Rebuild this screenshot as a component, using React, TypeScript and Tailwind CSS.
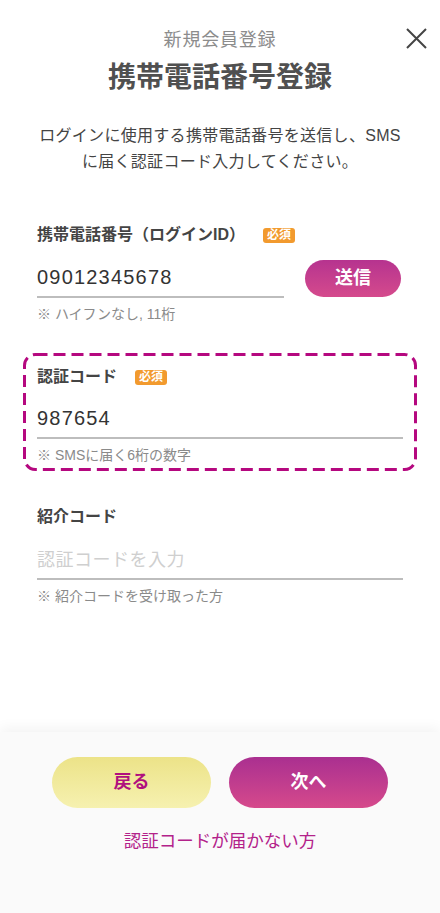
import { useState } from "react";

const FONT = { fontFamily: '"Liberation Sans", "Noto Sans CJK JP", sans-serif' };

function Required() {
  return (
    <span className="inline-flex items-center justify-center h-[15px] px-[4px] rounded-[3px] bg-[#f29a2e] text-white text-[12px] font-bold leading-none">
      必須
    </span>
  );
}

function Label({ text, required }: { text: string; required?: boolean }) {
  return (
    <div className="flex items-center gap-[18px] h-[22px]">
      <span className="text-[16px] leading-[22px] font-bold text-[#444]">{text}</span>
      {required && <Required />}
    </div>
  );
}

function Field({
  value,
  placeholder,
  onChange,
}: {
  value: string;
  placeholder?: string;
  onChange: (v: string) => void;
}) {
  return (
    <input
      className="w-full h-[42px] pt-[2px] border-b-[2px] border-[#bdbdbd] bg-transparent text-[20px] tracking-[1.2px] text-[#333] outline-none placeholder:text-[18px] placeholder:tracking-[0.5px] placeholder:text-[#cfcfcf]"
      style={FONT}
      value={value}
      placeholder={placeholder}
      onChange={(e) => onChange(e.target.value)}
    />
  );
}

function Hint({ children }: { children: React.ReactNode }) {
  return <p className="mt-[7px] text-[14px] leading-[18px] text-[#8a8a8a]">{children}</p>;
}

export default function App() {
  const [phone, setPhone] = useState("09012345678");
  const [code, setCode] = useState("987654");
  const [invite, setInvite] = useState("");

  return (
    <div className="min-h-[913px] w-full flex flex-col bg-white" style={FONT}>
      <div className="flex-1 relative">
        <button className="absolute right-[13px] top-[28px] w-[21px] h-[21px]" aria-label="close">
          <svg viewBox="0 0 21 21" className="w-full h-full" fill="none" stroke="#444" strokeWidth="2">
            <path d="M1 1 L20 20 M20 1 L1 20" />
          </svg>
        </button>

        <div className="pt-[28px] text-center">
          <p className="text-[18px] leading-[24px] tracking-[0.8px] text-[#8c8c8c]">新規会員登録</p>
          <h1 className="mt-[8px] text-[28px] leading-[36px] font-bold text-[#505050]">携帯電話番号登録</h1>
          <p className="mt-[27px] text-[16px] leading-[26px] tracking-[0.3px] text-[#444]">
            ログインに使用する携帯電話番号を送信し、SMS
            <br />
            に届く認証コード入力してください。
          </p>
        </div>

        <div className="px-[37px] mt-[49px]">
          <Label text="携帯電話番号（ログインID）" required />
          <div className="mt-[10px] flex items-end gap-[21px]">
            <div className="w-[247px]">
              <Field value={phone} onChange={setPhone} />
            </div>
            <button className="w-[96px] h-[37px] mb-[1px] rounded-full bg-gradient-to-b from-[#b6338f] to-[#d54a8c] text-white text-[18px] font-bold">
              送信
            </button>
          </div>
          <Hint>※ ハイフンなし, 11桁</Hint>
        </div>

        <div className="relative mx-[23px] mt-[30px] px-[14px] pt-[13px] pb-[7px]">
          <svg className="absolute inset-0 w-full h-full pointer-events-none" fill="none">
            <rect
              x="1.5"
              y="1.5"
              rx="11"
              className="w-[calc(100%-3px)] h-[calc(100%-3px)]"
              stroke="#b5087f"
              strokeWidth="3"
              strokeDasharray="12 6"
            />
          </svg>
          <Label text="認証コード" required />
          <div className="mt-[9px]">
            <Field value={code} onChange={setCode} />
          </div>
          <Hint>※ SMSに届く6桁の数字</Hint>
        </div>

        <div className="px-[37px] mt-[35px]">
          <Label text="紹介コード" />
          <div className="mt-[10px]">
            <Field value={invite} placeholder="認証コードを入力" onChange={setInvite} />
          </div>
          <Hint>※ 紹介コードを受け取った方</Hint>
        </div>
      </div>

      <div className="h-[181px] bg-[#fafafa] shadow-[0_-4px_12px_rgba(0,0,0,0.05)] pt-[25px] flex flex-col items-center">
        <div className="flex gap-[18px]">
          <button className="w-[159px] h-[51px] rounded-full bg-gradient-to-b from-[#ece388] to-[#f6f1b0] text-[#b0107e] text-[18px] font-bold">
            戻る
          </button>
          <button className="w-[159px] h-[51px] rounded-full bg-gradient-to-b from-[#aa2f90] to-[#d6498b] text-white text-[18px] font-bold">
            次へ
          </button>
        </div>
        <a className="mt-[21px] text-[17.5px] leading-[24px] text-[#b3228a]" href="#">
          認証コードが届かない方
        </a>
      </div>
    </div>
  );
}
